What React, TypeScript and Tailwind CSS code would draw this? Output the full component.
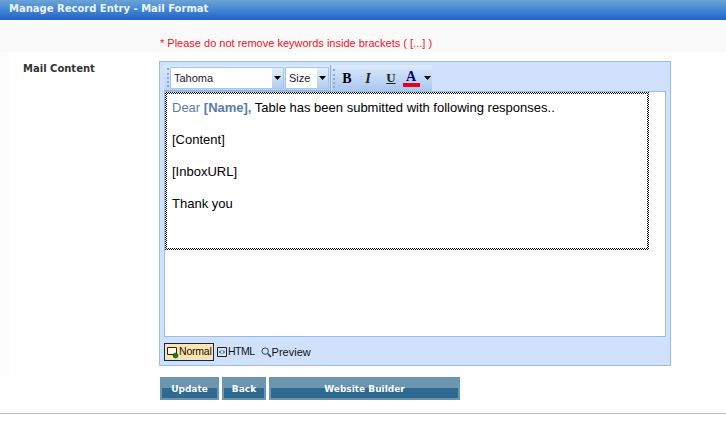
const Caret = () => (
  <svg width="7" height="4" viewBox="0 0 7 4" className="shrink-0">
    <path d="M0 0h7L3.5 4z" fill="#000" />
  </svg>
);

const Grip = () => (
  <div className="h-[19px] w-[2px] shrink-0 border-l-2 border-dotted border-[#8fa9c9]" />
);

function Select({ label, width }: { label: string; width: string }) {
  return (
    <div className={`flex h-5 items-stretch bg-white outline-1 outline-[#a9c4ea] ${width}`}>
      <span className="flex-1 pl-[3px] text-[11px] leading-5 text-[#222]">{label}</span>
      <span className="flex w-[11px] items-center justify-center bg-gradient-to-b from-[#e4eefc] to-[#b4cdf0]">
        <Caret />
      </span>
    </div>
  );
}

function SubmitButton({ label, width }: { label: string; width: string }) {
  return (
    <button className={`relative h-[23px] bg-[#6c96b0] ${width}`}>
      <span className="absolute inset-x-[2px] bottom-[2px] h-[10px] bg-[#2f6a90]" />
      <span className="relative block text-center font-['DejaVu_Sans'] text-[9px] font-bold leading-[25px] text-white">
        {label}
      </span>
    </button>
  );
}

export default function App() {
  return (
    <div className="h-[425px] w-[726px] overflow-hidden bg-white font-['Liberation_Sans',sans-serif]">
      <div className="h-5 bg-gradient-to-b from-[#6ea3d4] via-[#3f86d6] to-[#2462c2] pl-[9px] font-['DejaVu_Sans'] text-[10px] font-bold leading-[17px] text-[#eef4fb]">
        Manage Record Entry - Mail Format
      </div>

      <div className="h-8 bg-[#fafafa] pl-[160px] pt-[16px] text-[11px] leading-[14px] text-[#f5102a]">
        * Please do not remove keywords inside brackets ( [...] )
      </div>

      <div className="flex bg-white">
        <div className="h-[325px] w-[11px] bg-[#fdfdfd]" />
        <div className="w-[148px] pl-3 pt-[10px] font-['DejaVu_Sans'] text-[10px] font-bold leading-[14px] text-[#333]">
          Mail Content
        </div>
        <div className="mt-[9px] h-[305px] w-[512px] border border-[#9cbde3] bg-[#d0e2fb] px-1 pt-[3px]">
          <div className="flex h-[26px] gap-px">
            <div className="flex w-[167px] items-center border-b border-r border-[#8fb0da] bg-gradient-to-b from-[#dce9fb] to-[#bcd4f4] pl-[3px]">
              <Grip />
              <div className="ml-[2px] flex gap-[3px]">
                <Select label="Tahoma" width="w-[112px]" />
                <Select label="Size" width="w-[42px]" />
              </div>
            </div>
            <div className="flex w-[100px] items-center bg-gradient-to-b from-[#dce9fb] to-[#a9c6ee] pl-px">
              <Grip />
              <span className="ml-px w-[22px] text-center font-['Liberation_Serif'] text-[14px] font-bold text-black">B</span>
              <span className="w-5 text-center font-['Liberation_Serif'] text-[14px] font-bold italic text-[#222]">I</span>
              <span className="ml-[3px] w-5 text-center font-['Liberation_Serif'] text-[13px] font-bold text-[#222] underline">U</span>
              <span className="flex w-5 flex-col items-center leading-none">
                <span className="font-['Liberation_Serif'] text-[14px] font-bold leading-[13px] text-[#000080]">A</span>
                <span className="h-1 w-[17px] bg-[#e8001c]" />
              </span>
              <span className="ml-[3px]"><Caret /></span>
            </div>
          </div>

          <div className="h-[246px] border border-[#9cbde3] bg-white">
            <div className="h-[158px] w-[484px] bg-[repeating-conic-gradient(#000_0_25%,#fff_0_50%)] bg-[length:2px_2px] p-[2px]">
              <div className="h-full bg-white pl-[5px] pt-[6px] text-[13px] leading-4 text-black">
                <p className="mb-4">
                  <span className="text-[#5b7ba8]">Dear <b>[Name],</b></span> Table has been submitted with following responses..
                </p>
                <p className="mb-4">[Content]</p>
                <p className="mb-4">[InboxURL]</p>
                <p>Thank you</p>
              </div>
            </div>
          </div>

          <div className="mt-[6px] flex items-center text-[11px] text-[#111]">
            <div className="flex h-[18px] w-[50px] items-center border border-[#0a246a] bg-[#ffe3ae] pl-px">
              <svg width="13" height="13" viewBox="0 0 13 13" className="shrink-0">
                <path d="M1.5 1.5h9v7h-9z" fill="#fff6e0" stroke="#222" />
                <circle cx="9.5" cy="9.5" r="2.5" fill="#1c7a2c" stroke="#0b3d16" strokeWidth="0.5" />
              </svg>
              <span className="text-[10.5px] tracking-[-0.2px]">Normal</span>
            </div>
            <svg width="10" height="10" viewBox="0 0 10 10" className="ml-[3px] shrink-0">
              <path d="M.5.5h9v9h-9z" fill="none" stroke="#222" />
              <path d="M4 3.5 2.5 5 4 6.5M6 3.5 7.5 5 6 6.5" fill="none" stroke="#222" />
            </svg>
            <span className="ml-px text-[10.5px] tracking-[-0.5px]">HTML</span>
            <svg width="11" height="11" viewBox="0 0 12 12" className="ml-[6px] shrink-0">
              <circle cx="4.5" cy="4.5" r="3.5" fill="none" stroke="#333" />
              <path d="M7.5 7.5 11 11" stroke="#1a2a9a" strokeWidth="1.6" />
            </svg>
            <span>Preview</span>
          </div>
        </div>
      </div>

      <div className="flex gap-[3px] pl-[160px]">
        <SubmitButton label="Update" width="w-[59px]" />
        <SubmitButton label="Back" width="w-11" />
        <SubmitButton label="Website Builder" width="w-[191px]" />
      </div>

      <div className="mt-[13px] h-px bg-[#bdbdbd]" />
    </div>
  );
}
